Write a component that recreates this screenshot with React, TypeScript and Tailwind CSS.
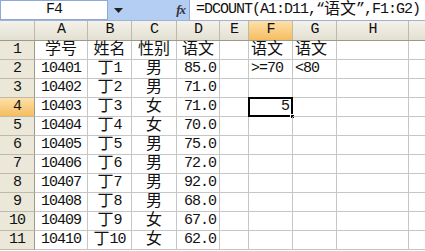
import React from 'react';

type Col = { key: string; w: string; };

const cols: Col[] = [
  { key: 'A', w: 'w-[53px]' },
  { key: 'B', w: 'w-[44px]' },
  { key: 'C', w: 'w-[45px]' },
  { key: 'D', w: 'w-[43px]' },
  { key: 'E', w: 'w-[29px]' },
  { key: 'F', w: 'w-[44px]' },
  { key: 'G', w: 'w-[44px]' },
  { key: 'H', w: 'w-[72px]' },
  { key: 'I', w: 'w-[80px]' },
];

type Align = 'l' | 'c' | 'r';
type Cell = { t: string; a: Align };

const c = (t: string): Cell => ({ t, a: 'c' });
const l = (t: string): Cell => ({ t, a: 'l' });
const r = (t: string): Cell => ({ t, a: 'r' });

const people: [string, string, string, string][] = [
  ['10401', '丁1', '男', '85.0'],
  ['10402', '丁2', '男', '71.0'],
  ['10403', '丁3', '女', '71.0'],
  ['10404', '丁4', '女', '70.0'],
  ['10405', '丁5', '男', '75.0'],
  ['10406', '丁6', '男', '72.0'],
  ['10407', '丁7', '男', '92.0'],
  ['10408', '丁8', '男', '68.0'],
  ['10409', '丁9', '女', '67.0'],
  ['10410', '丁10', '女', '62.0'],
];

const rows: Cell[][] = [
  [c('学号'), c('姓名'), c('性别'), c('语文'), l(''), l('语文'), l('语文'), l(''), l('')],
  ...people.map((p, i) => [
    c(p[0]), c(p[1]), c(p[2]), r(p[3]), l(''),
    i === 0 ? l('>=70') : i === 2 ? r('5') : l(''),
    i === 0 ? l('<80') : l(''),
    l(''), l(''),
  ]),
];

// chinese runs are drawn a bit larger, like SimSun full-width glyphs
function Txt({ text }: { text: string }) {
  const parts = text.split(/([\u4e00-\u9fff]+)/).filter(Boolean);
  return (
    <>
      {parts.map((p, i) =>
        /[\u4e00-\u9fff]/.test(p) ? (
          <span key={i} className="text-[16px] tracking-normal">{p}</span>
        ) : (
          <span key={i} className="text-[15px] tracking-[-1px]">{p}</span>
        )
      )}
    </>
  );
}

const alignCls: Record<Align, string> = {
  l: 'justify-start pl-[2px]',
  c: 'justify-center',
  r: 'justify-end pr-[3px]',
};

export default function App() {
  const font = "font-['Liberation_Mono','Noto_Sans_CJK_SC',monospace]";
  return (
    <div className={`w-[425px] h-[251px] overflow-hidden bg-white text-[#111] ${font}`}>
      {/* formula bar */}
      <div className="flex h-[21px] border-b border-[#9fb3d4] bg-[#b3cdf3]">
        <div className="w-[108px] h-[20px] bg-white border border-[#8ea9d6] flex items-center justify-center">
          <Txt text="F4" />
        </div>
        <div className="w-[81px] flex items-center justify-between pl-[6px] pr-[4px]">
          <svg width="9" height="5" viewBox="0 0 9 5">
            <path d="M0 0 H9 L4.5 5 Z" fill="#222" />
          </svg>
          <span className="font-['Liberation_Serif',serif] italic text-[13px] font-bold tracking-[-1px] text-[#333]">fx</span>
        </div>
        <div className="flex-1 min-w-0 h-[20px] bg-white flex items-center pl-[6px] whitespace-nowrap overflow-hidden border-l border-[#8ea9d6]">
          <Txt text="=DCOUNT(A1:D11,“语文”,F1:G2)" />
        </div>
      </div>

      {/* column headers */}
      <div className="flex h-[20px] border-b border-[#9d9a8c]">
        <div className="w-[35px] shrink-0 bg-gradient-to-b from-[#f4f2ea] to-[#e3e0d2] border-r border-[#bdbaac]" />
        {cols.map((col) => (
          <div
            key={col.key}
            className={`${col.w} shrink-0 flex items-center justify-center border-r border-[#bdbaac] ${
              col.key === 'F'
                ? 'bg-gradient-to-b from-[#fde0a8] to-[#f6bd5e]'
                : 'bg-gradient-to-b from-[#f4f2ea] to-[#e3e0d2]'
            }`}
          >
            <Txt text={col.key} />
          </div>
        ))}
      </div>

      {/* grid */}
      {rows.map((row, ri) => (
        <div key={ri} className="flex h-[19px]">
          <div
            className={`w-[35px] shrink-0 flex items-end justify-center leading-[18px] border-r border-b border-[#bdbaac] ${
              ri === 3
                ? 'bg-gradient-to-b from-[#fde0a8] to-[#f6bd5e] border-r-[#9d9a8c]'
                : 'bg-[#ebe8da] border-r-[#9d9a8c]'
            }`}
          >
            <Txt text={String(ri + 1)} />
          </div>
          {row.map((cell, ci) => (
            <div
              key={ci}
              className={`${cols[ci].w} shrink-0 relative flex items-end leading-[18px] whitespace-nowrap border-r border-b border-[#c6c6c6] ${alignCls[cell.a]}`}
            >
              <Txt text={cell.t} />
              {ri === 3 && ci === 5 && (
                <>
                  <div className="absolute -left-[1px] -top-[1px] w-[45px] h-[20px] border-2 border-black pointer-events-none" />
                  <div className="absolute -right-[3px] -bottom-[3px] w-[5px] h-[5px] bg-black border border-white" />
                </>
              )}
            </div>
          ))}
        </div>
      ))}
    </div>
  );
}
